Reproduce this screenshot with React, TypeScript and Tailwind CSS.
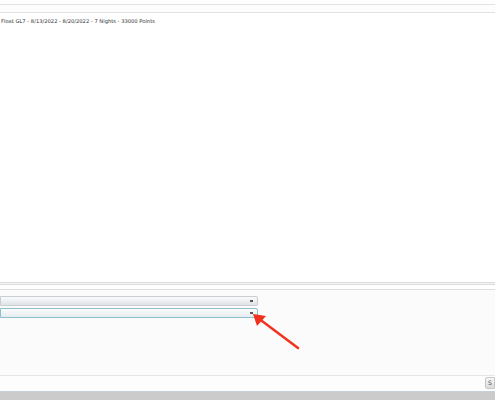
import React from 'react'

const booking = 'Float GL7 - 8/13/2022 - 8/20/2022 - 7 Nights - 33000 Points'

function Dropdown({ focused }: { focused?: boolean }) {
  return (
    <div
      className={`relative h-[10px] w-[258px] rounded-r-[2px] border ${
        focused
          ? 'border-[#8fbfcf] bg-gradient-to-b from-[#fafcfd] to-[#e6ecef]'
          : 'border-[#c9ced2] bg-gradient-to-b from-[#fbfbfc] to-[#dfe3e6]'
      }`}
    >
      <span className="absolute right-[4px] top-[3px] h-[2px] w-[3px] bg-[#555]" />
    </div>
  )
}

export default function App() {
  return (
    <div className="flex h-[400px] w-[495px] flex-col overflow-hidden bg-white font-['DejaVu_Sans',sans-serif]">
      {/* header strip */}
      <div className="mt-[4px] h-[9px] border-y border-[#e2e2e2] bg-[#fdfdfd]" />

      {/* booking list */}
      <div className="flex-1 px-[1px] pt-[5px]">
        <p className="text-[5.2px] leading-[7px] text-[#333]">{booking}</p>
      </div>

      {/* splitter */}
      <div className="h-[3px] border-y border-[#dcdcdc] bg-[#f4f4f4]" />
      <div className="mt-[4px] border-t border-[#dedede]" />

      {/* form panel */}
      <div className="relative flex h-[85px] flex-col gap-[2px] bg-[#fbfbfb] pt-[6px]">
        <Dropdown />
        <Dropdown focused />

        <svg className="absolute left-[248px] top-[22px]" width="56" height="40" viewBox="0 0 56 40">
          <line x1="50" y1="36" x2="10" y2="6" stroke="#f0321e" strokeWidth="2.5" strokeLinecap="round" />
          <polygon points="5,2 18,4 9,14" fill="#f0321e" />
        </svg>
      </div>

      {/* footer */}
      <div className="flex h-[16px] justify-end border-t border-[#e6e6e6] bg-[#fdfdfd] pt-[1px]">
        <div className="h-[12px] w-[10px] rounded-l-[2px] border border-[#c8c8c8] bg-gradient-to-b from-[#f6f6f6] to-[#dcdcdc] pl-[2px] text-[6px] leading-[10px] text-[#444]">
          S
        </div>
      </div>
      <div className="h-[9px] border-t border-[#c5d2da] bg-[#cbcbcb]" />
    </div>
  )
}
